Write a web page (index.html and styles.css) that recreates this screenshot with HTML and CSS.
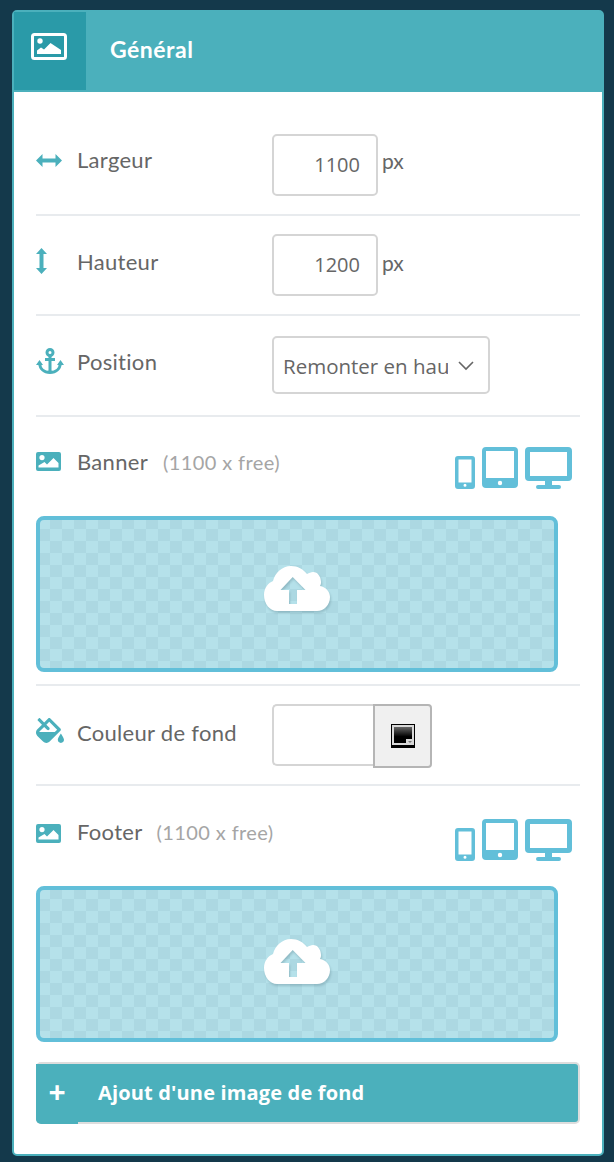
FILE: index.html
```html
<!DOCTYPE html>
<html lang="fr">
<head>
  <meta charset="UTF-8">
  <title>Général</title>
  <link rel="stylesheet" href="styles.css">
</head>
<body>
  <svg class="defs" width="0" height="0">
    <defs>
      <symbol id="picture" viewBox="0 0 25 19">
        <path d="M2 0h21a2 2 0 0 1 2 2v15a2 2 0 0 1-2 2H2a2 2 0 0 1-2-2V2a2 2 0 0 1 2-2zM6 3a2.6 2.6 0 1 0 0 5.200a2.600 2.600 0 0 0 0-5.200zM2.500 15.500h20V11l-5-5-6.500 6.500-2.500-2.500-6 3.500z" fill-rule="evenodd"/>
      </symbol>
      <symbol id="phone" viewBox="0 0 20 33">
        <path d="M3 0h14a3 3 0 0 1 3 3v27a3 3 0 0 1-3 3H3a3 3 0 0 1-3-3V3a3 3 0 0 1 3-3zM3.500 3.500v23h13v-23zM10 27.800a1.500 1.500 0 1 0 0 3a1.500 1.500 0 0 0 0-3z" fill-rule="evenodd"/>
      </symbol>
      <symbol id="tablet" viewBox="0 0 36 41">
        <path d="M4 0h28a4 4 0 0 1 4 4v33a4 4 0 0 1-4 4H4a4 4 0 0 1-4-4V4a4 4 0 0 1 4-4zM4 4v27h28V4zM18 33.800a2.200 2.200 0 1 0 0 4.400a2.200 2.200 0 0 0 0-4.400z" fill-rule="evenodd"/>
      </symbol>
      <symbol id="desktop" viewBox="0 0 47 42">
        <path d="M4 0h39a4 4 0 0 1 4 4v26a4 4 0 0 1-4 4H4a4 4 0 0 1-4-4V4a4 4 0 0 1 4-4zM5 5v24h37V5zM20 34h7v4h7a2 2 0 0 1 0 4H13a2 2 0 0 1 0-4h7z" fill-rule="evenodd"/>
      </symbol>
      <symbol id="cloud" viewBox="0 0 66 47">
        <path d="M13 45C6 45 0 38 0 29c0-7 4-12 9-14C11 7 18 0 27 0c7 0 12 3 16 8 2-1 4-2 6-2 5 0 8 5 8 10 0 1 0 2-1 4 6 1 10 6 10 11 0 8-6 14-13 14zM28.700 11L16.500 24H25v14h8V24h8.500z" fill-rule="evenodd"/>
      </symbol>
    </defs>
  </svg>

  <div class="panel">
    <div class="panel-header">
      <div class="header-icon">
        <svg width="36" height="27" viewBox="0 0 36 27">
          <rect x="1.500" y="1.500" width="33" height="24" rx="2" fill="none" stroke="#fff" stroke-width="3"/>
          <circle cx="9" cy="8" r="2.700" fill="#fff"/>
          <path d="M6 21v-3.500l4-3 3 2 6.500-6.500L30 17v4z" fill="#fff"/>
        </svg>
      </div>
      <span class="header-title">Général</span>
    </div>

    <div class="panel-body">
      <div class="row row-size">
        <svg class="row-icon icon-width" width="26" height="13" viewBox="0 0 26 13">
          <path d="M0 6.500L6.500 0v4.500h13V0L26 6.500 19.500 13V8.500h-13V13z" fill="#4bb0bc"/>
        </svg>
        <span class="label label-first">Largeur</span>
        <input class="field" type="text" value="1100">
        <span class="unit unit-first">px</span>
      </div>

      <div class="row row-size">
        <svg class="row-icon icon-up" width="26" height="26" viewBox="0 0 26 26">
          <path d="M5.500 0l5.500 6H7.500v14H11l-5.500 6L0 20h3.500V6H0z" fill="#4bb0bc"/>
        </svg>
        <span class="label">Hauteur</span>
        <input class="field" type="text" value="1200">
        <span class="unit">px</span>
      </div>

      <div class="row row-position">
        <svg class="row-icon icon-up icon-wide" width="28" height="26" viewBox="0 0 28 26">
          <g fill="none" stroke="#4bb0bc" stroke-width="3">
            <circle cx="14" cy="4.500" r="3"/>
            <path d="M14 7v17M9 11.500h10M3.500 15c.5 6 4.500 9.500 10.500 9.500s10-3.500 10.500-9.500"/>
          </g>
          <path d="M0 17l3.500-5 3.500 5zM21 17l3.500-5 3.500 5z" fill="#4bb0bc"/>
        </svg>
        <span class="label">Position</span>
        <div class="select-wrap">
          <select class="select">
            <option>Remonter en haut de page</option>
          </select>
          <svg class="chevron" width="16" height="10" viewBox="0 0 16 10">
            <path d="M1 1l7 7 7-7" fill="none" stroke="#666" stroke-width="1.600"/>
          </svg>
        </div>
      </div>

      <div class="row row-upload row-banner">
        <div class="upload-head">
          <svg class="row-icon" width="25" height="19"><use href="#picture"/></svg>
          <span class="label">Banner</span>
          <span class="size-hint">(1100 x free)</span>
          <div class="devices">
            <svg class="phone" width="20" height="33"><use href="#phone"/></svg>
            <svg width="36" height="41"><use href="#tablet"/></svg>
            <svg width="47" height="42"><use href="#desktop"/></svg>
          </div>
        </div>
        <div class="dropzone">
          <svg class="cloud" width="66" height="47"><use href="#cloud"/></svg>
        </div>
      </div>

      <div class="row row-color">
        <svg class="row-icon icon-bucket icon-wide" width="28" height="25" viewBox="0 0 576 512">
          <path d="M512 320s-64 92.650-64 128c0 35.350 28.660 64 64 64s64-28.650 64-64-64-128-64-128zm-9.370-102.940L294.940 9.370C288.690 3.120 280.500 0 272.310 0s-16.380 3.120-22.620 9.370l-81.580 81.580L81.930 4.760c-6.250-6.250-16.380-6.250-22.620 0L36.690 27.380c-6.240 6.250-6.240 16.380 0 22.630l86.190 86.180-94.760 94.760c-37.490 37.480-37.490 98.260 0 135.750l117.190 117.190c18.740 18.740 43.310 28.120 67.870 28.120 24.570 0 49.130-9.370 67.870-28.120l221.570-221.570c12.500-12.500 12.500-32.750.010-45.250zm-116.220 70.970H65.930c1.360-3.840 3.570-7.980 7.430-11.830l13.150-13.150 81.610-81.610 58.600 58.600c12.490 12.490 32.750 12.490 45.240 0s12.490-32.750 0-45.240l-58.600-58.600 58.950-58.950 162.440 162.440-48.340 48.340z" fill="#4bb0bc"/>
        </svg>
        <span class="label">Couleur de fond</span>
        <input class="color-field" type="text">
        <button class="color-button" type="button">
          <svg width="24" height="24" viewBox="0 0 24 24">
            <defs>
              <linearGradient id="swatch" x1="0" y1="0" x2="0" y2="1">
                <stop offset="0" stop-color="#666"/>
                <stop offset="0.6" stop-color="#000"/>
              </linearGradient>
            </defs>
            <rect width="24" height="24" fill="#000"/>
            <rect x="1" y="1" width="22" height="20" fill="#d8d8d8"/>
            <rect x="3" y="3" width="18" height="16" fill="url(#swatch)"/>
            <rect x="15" y="15" width="8" height="6" fill="#d8d8d8"/>
            <path d="M17 17h4l-2 2z" fill="#777"/>
          </svg>
        </button>
      </div>

      <div class="row row-upload row-footer">
        <div class="upload-head">
          <svg class="row-icon" width="25" height="19"><use href="#picture"/></svg>
          <span class="label">Footer</span>
          <span class="size-hint">(1100 x free)</span>
          <div class="devices">
            <svg class="phone" width="20" height="33"><use href="#phone"/></svg>
            <svg width="36" height="41"><use href="#tablet"/></svg>
            <svg width="47" height="42"><use href="#desktop"/></svg>
          </div>
        </div>
        <div class="dropzone">
          <svg class="cloud" width="66" height="47"><use href="#cloud"/></svg>
        </div>
      </div>

      <button class="add-button" type="button">
        <span class="add-plus">+</span>
        <span class="add-text">Ajout d'une image de fond</span>
      </button>
    </div>
  </div>
</body>
</html>
```

FILE: styles.css
```css
* {
  box-sizing: border-box;
}

body {
  margin: 0;
  background-color: #14394b;
  font-family: Lato, "Open Sans", sans-serif;
  color: #666;
}

.defs {
  position: absolute;
}

.panel {
  width: 592px;
  height: 1146px;
  margin: 10px 0 0 12px;
  background-color: #fff;
  border: 2px solid #4bb0bc;
  border-radius: 5px;
}

.panel-header {
  display: flex;
  align-items: flex-start;
  height: 80px;
  background-color: #4bb0bc;
}

.header-icon {
  display: flex;
  justify-content: center;
  align-items: flex-start;
  flex: none;
  width: 72px;
  height: 78px;
  padding: 21px 3px 0 0;
  margin-right: 24px;
  background-color: #2a9aa8;
}

.header-title {
  margin-top: 23px;
  font-size: 23px;
  line-height: 28px;
  font-weight: 700;
  letter-spacing: 0.5px;
  color: #fff;
}

.panel-body {
  padding: 24px 22px 0;
}

.row {
  display: flex;
  align-items: center;
  border-bottom: 2px solid #e8ebee;
}

.row-size {
  padding: 18px 0;
}

.row-position {
  padding: 20px 0 21px;
}

.row-color {
  padding: 18px 0 16px;
}

.row-icon {
  flex: none;
  margin-right: 15px;
  fill: #4bb0bc;
}

.icon-width {
  margin-bottom: 10px;
}

.icon-up {
  margin-bottom: 8px;
}

.icon-bucket {
  margin-bottom: 11px;
}

.icon-wide {
  margin-right: 13px;
}

.label {
  flex: none;
  width: 195px;
  margin-bottom: 6px;
  font-size: 22px;
  line-height: 24px;
  letter-spacing: 0.3px;
}

.label-first {
  margin-bottom: 10px;
}

.field {
  width: 106px;
  height: 62px;
  padding: 0 16px 2px 0;
  border: 2px solid #d5d5d5;
  border-radius: 5px;
  font-family: "Open Sans", sans-serif;
  font-size: 20px;
  color: #666;
  text-align: right;
}

.unit {
  margin: 0 0 4px 4px;
  font-size: 21px;
  line-height: 24px;
}

.unit-first {
  margin-bottom: 8px;
}

.select-wrap {
  position: relative;
  width: 218px;
  height: 58px;
}

.select {
  display: block;
  width: 100%;
  height: 100%;
  padding: 2px 40px 0 9px;
  appearance: none;
  background-color: #fff;
  border: 2px solid #d5d5d5;
  border-radius: 5px;
  font-family: "Open Sans", sans-serif;
  font-size: 20.500px;
  color: #666;
}

.chevron {
  position: absolute;
  top: 25px;
  right: 16px;
}

.row-upload {
  display: block;
}

.row-banner {
  padding: 30px 0 12px;
}

.row-footer {
  padding: 33px 0 20px;
  border-bottom: 0;
}

.upload-head {
  display: flex;
  align-items: center;
  height: 42px;
  margin-bottom: 27px;
}

.row-footer .upload-head {
  margin-bottom: 25px;
}

.upload-head .row-icon {
  margin-bottom: 14px;
  margin-right: 16px;
}

.upload-head .label {
  width: auto;
  margin-bottom: 12px;
}

.row-footer .label,
.row-footer .size-hint {
  margin-bottom: 16px;
}

.size-hint {
  margin: 0 0 12px 15px;
  font-size: 20px;
  line-height: 24px;
  letter-spacing: 0.4px;
  color: #a5a5a5;
}

.row-footer .size-hint {
  margin-left: 14px;
}

.devices {
  display: flex;
  align-items: flex-start;
  gap: 7px;
  margin-left: auto;
  margin-right: 8px;
  fill: #62bfd9;
}

.phone {
  margin-top: 9px;
}

.dropzone {
  display: flex;
  justify-content: center;
  align-items: center;
  width: 522px;
  height: 156px;
  border: 4px solid #62bfd9;
  border-radius: 8px;
  background: repeating-conic-gradient(#acd8e2 0 25%, #b5e1ea 0 50%) 10px 9px / 24px 24px;
}

.cloud {
  margin: 0 0 9px 0;
  fill: #fff;
  filter: drop-shadow(1px 2px 1px rgba(90, 130, 140, 0.35));
}

.row-footer .cloud {
  margin-bottom: 3px;
}

.color-field {
  width: 101px;
  height: 62px;
  margin-bottom: 2px;
  border: 2px solid #d5d5d5;
  border-right: 0;
  border-radius: 5px 0 0 5px;
}

.color-button {
  display: flex;
  justify-content: center;
  align-items: center;
  width: 59px;
  height: 64px;
  padding: 0;
  background-color: #f0f0f0;
  border: 2px solid #b5b5b5;
  border-radius: 0 4px 4px 0;
}

.add-button {
  display: flex;
  align-items: stretch;
  width: 544px;
  height: 62px;
  padding: 0;
  background-color: #4bb0bc;
  border: 2px solid #ddd;
  border-left: 0;
  border-radius: 5px;
  font-family: "Open Sans", sans-serif;
  color: #fff;
  text-align: left;
}

.add-plus {
  flex: none;
  width: 42px;
  margin-bottom: -2px;
  background-color: #4bb0bc;
  border-radius: 0 0 0 5px;
  font-size: 30px;
  font-weight: 700;
  line-height: 56px;
  text-align: center;
}

.add-text {
  margin-left: 20px;
  font-size: 20px;
  font-weight: 700;
  letter-spacing: 0.16px;
  line-height: 58px;
}
```
